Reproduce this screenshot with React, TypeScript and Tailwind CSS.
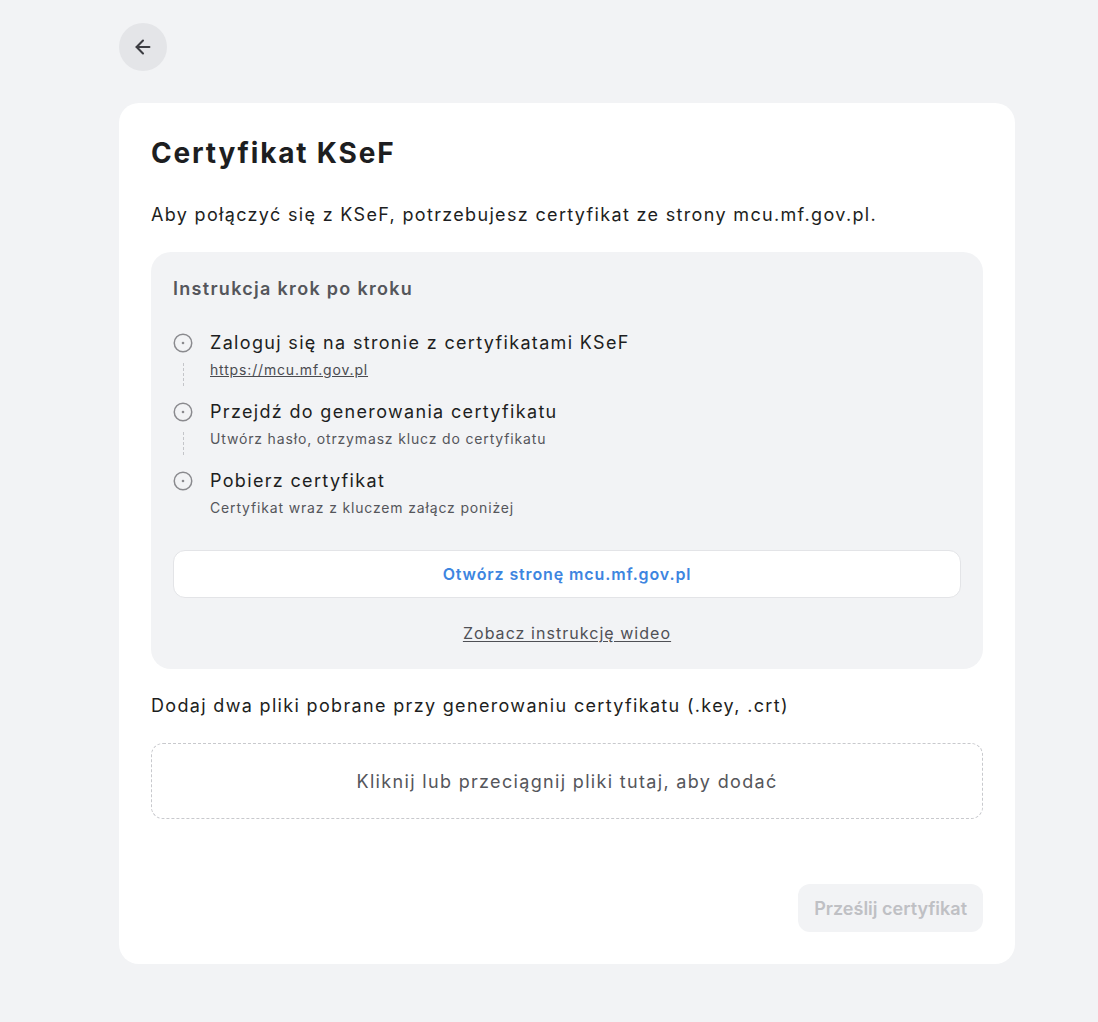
import { ArrowLeft } from 'lucide-react';

const steps = [
  {
    title: 'Zaloguj się na stronie z certyfikatami KSeF',
    note: 'https://mcu.mf.gov.pl',
    link: true,
  },
  {
    title: 'Przejdź do generowania certyfikatu',
    note: 'Utwórz hasło, otrzymasz klucz do certyfikatu',
  },
  {
    title: 'Pobierz certyfikat',
    note: 'Certyfikat wraz z kluczem załącz poniżej',
  },
];

function StepIcon() {
  return (
    <svg width="20" height="20" viewBox="0 0 20 20" className="shrink-0">
      <circle cx="10" cy="10" r="8.75" fill="none" stroke="#8a8a8e" strokeWidth="1.5" />
      <circle cx="10" cy="10" r="1.3" fill="#8a8a8e" />
    </svg>
  );
}

export default function App() {
  return (
    <div
      className="min-h-screen bg-[#f2f3f5] pl-[119px] pt-[23px] pb-[59px] text-[#1d1e21]"
      style={{ fontFamily: 'Inter, "Noto Sans", sans-serif' }}
    >
      <button
        aria-label="Wróć"
        className="flex h-12 w-12 items-center justify-center rounded-full bg-[#e4e5e8] text-[#3c3d42]"
      >
        <ArrowLeft size={22} strokeWidth={2.25} />
      </button>

      <div className="mt-8 flex w-[896px] flex-col rounded-[20px] bg-white px-8 pt-8 pb-8">
        <h1 className="text-[28px] font-bold leading-9 tracking-[0.065em]">Certyfikat KSeF</h1>
        <p className="mt-[30px] text-[18px] leading-7 tracking-[0.074em]">
          Aby połączyć się z KSeF, potrzebujesz certyfikat ze strony mcu.mf.gov.pl.
        </p>

        {/* Instrukcja */}
        <div className="mt-[23px] flex flex-col rounded-[20px] bg-[#f2f3f5] px-[22px] pt-[23px] pb-6">
          <h2 className="text-[18px] font-semibold leading-7 tracking-[0.072em] text-[#55565b]">
            Instrukcja krok po kroku
          </h2>
          <ol className="mt-[26px] flex flex-col gap-3">
            {steps.map((step, ix) => (
              <li key={ix} className="flex gap-[17px]">
                <div className="flex w-5 flex-col items-center pt-1">
                  <StepIcon />
                  {ix < steps.length - 1 && (
                    <div className="mt-[10px] h-[23px] border-l border-dashed border-[#c4c5c9]" />
                  )}
                </div>
                <div className="flex flex-col">
                  <span className="text-[18px] leading-7 tracking-[0.074em]">{step.title}</span>
                  {step.link ? (
                    <a
                      href="#"
                      className="mt-[3px] text-[14px] leading-5 tracking-[0.06em] text-[#4a4b50] underline"
                    >
                      {step.note}
                    </a>
                  ) : (
                    <span className="mt-[3px] text-[14px] leading-5 tracking-[0.06em] text-[#55565b]">
                      {step.note}
                    </span>
                  )}
                </div>
              </li>
            ))}
          </ol>

          <button className="mt-8 h-[48px] rounded-xl border border-[#e3e4e7] bg-white text-[16px] font-semibold tracking-[0.055em] text-[#3d85e0]">
            Otwórz stronę mcu.mf.gov.pl
          </button>
          <a
            href="#"
            className="mt-[23px] self-center text-[16px] leading-6 tracking-[0.065em] text-[#4f5055] underline underline-offset-2"
          >
            Zobacz instrukcję wideo
          </a>
        </div>

        <p className="mt-[23px] text-[18px] leading-7 tracking-[0.074em]">
          Dodaj dwa pliki pobrane przy generowaniu certyfikatu (.key, .crt)
        </p>
        <div className="mt-[23px] flex h-[76px] items-center justify-center rounded-xl border border-dashed border-[#c8c9cd] text-[18px] tracking-[0.074em] text-[#55565b]">
          Kliknij lub przeciągnij pliki tutaj, aby dodać
        </div>

        <div className="mt-[65px] flex justify-end">
          <button
            disabled
            className="h-12 rounded-xl bg-[#f2f3f5] px-4 text-[18px] font-semibold text-[#bfc0c4]"
          >
            Prześlij certyfikat
          </button>
        </div>
      </div>
    </div>
  );
}
